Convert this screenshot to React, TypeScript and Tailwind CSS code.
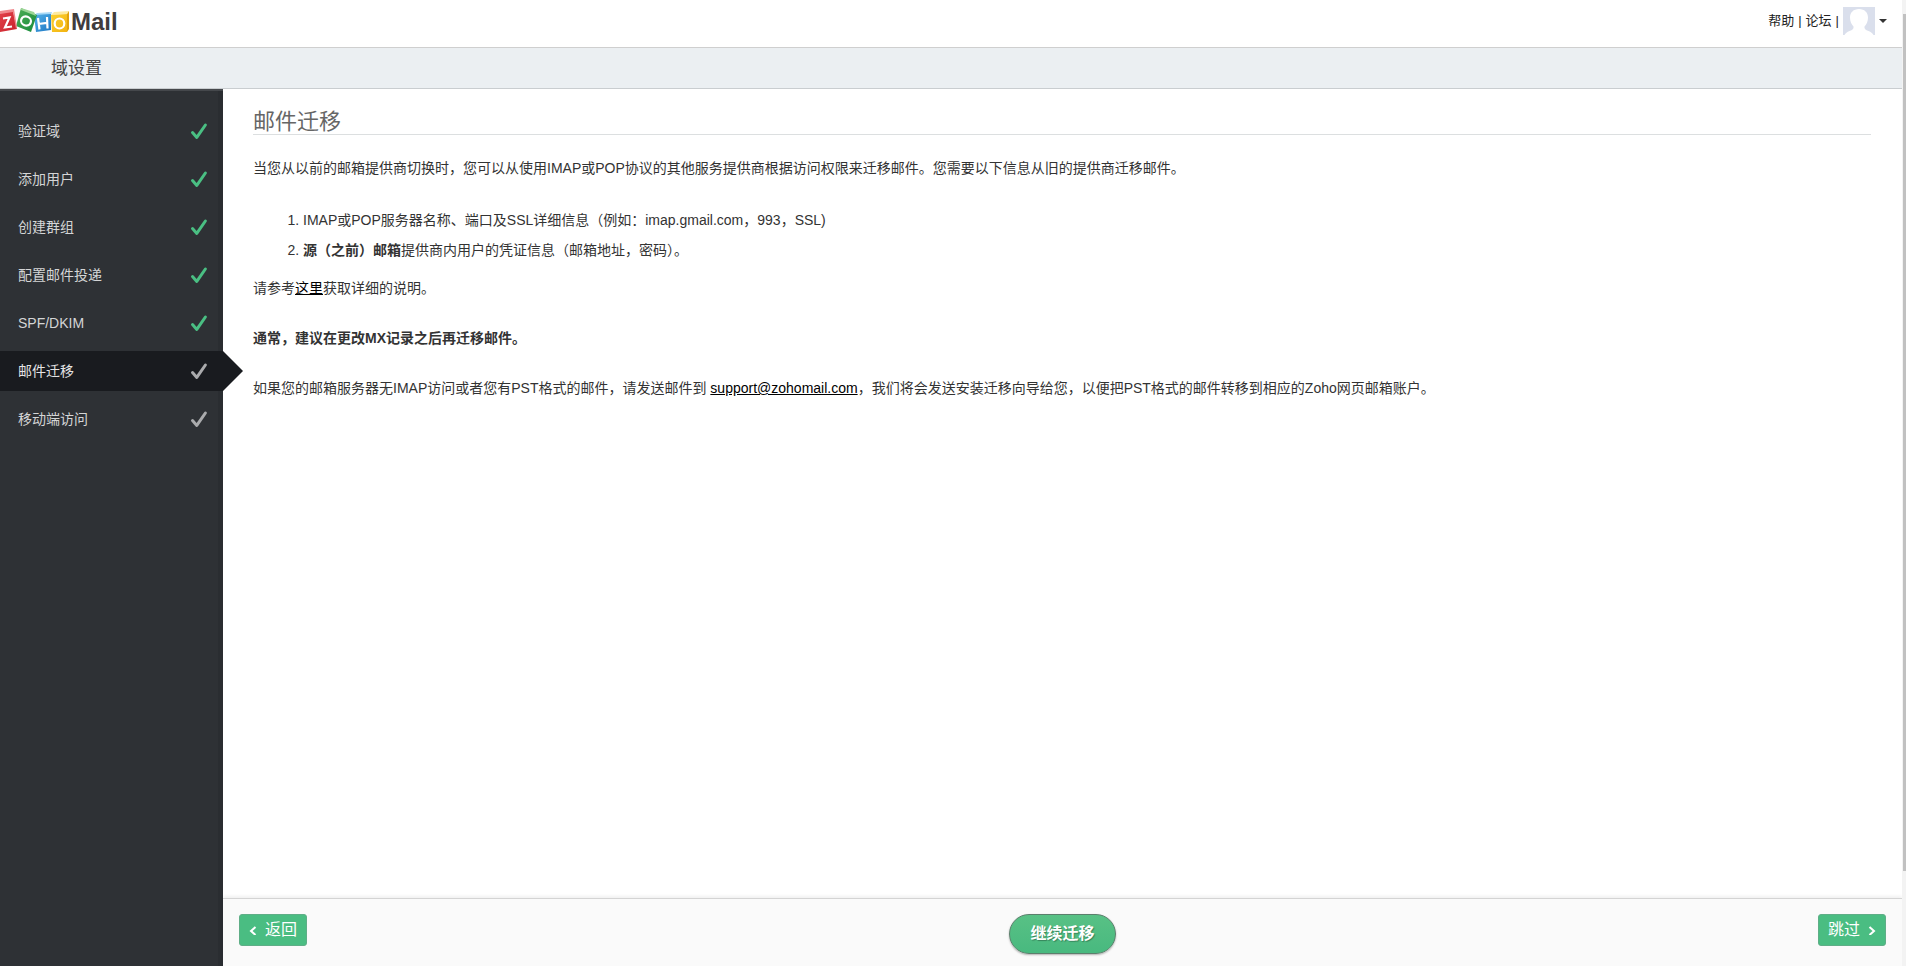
type Step = { label: string; done: boolean; active?: boolean };

const steps: Step[] = [
  { label: "验证域", done: true },
  { label: "添加用户", done: true },
  { label: "创建群组", done: true },
  { label: "配置邮件投递", done: true },
  { label: "SPF/DKIM", done: true },
  { label: "邮件迁移", done: false, active: true },
  { label: "移动端访问", done: false },
];

function Logo() {
  return (
    <svg width="120" height="36" viewBox="0 0 120 36" role="img" aria-label="ZOHO Mail">
      <defs>
        <linearGradient id="red" x1="0" y1="0" x2="1" y2="1">
          <stop offset="0" stopColor="#e2434a" />
          <stop offset="1" stopColor="#c8202a" />
        </linearGradient>
        <linearGradient id="green" x1="0" y1="0" x2="1" y2="1">
          <stop offset="0" stopColor="#4fae55" />
          <stop offset="1" stopColor="#178a3c" />
        </linearGradient>
        <linearGradient id="blue" x1="0" y1="0" x2="1" y2="1">
          <stop offset="0" stopColor="#55b2ea" />
          <stop offset="1" stopColor="#1b76c2" />
        </linearGradient>
        <linearGradient id="gold" x1="0" y1="0" x2="1" y2="1">
          <stop offset="0" stopColor="#fbd02e" />
          <stop offset="1" stopColor="#f3b412" />
        </linearGradient>
      </defs>
      <path d="M51 15 L54 12 L69 11 L67 14Z" fill="#fdeaa0" />
      <path d="M67 14 L69 11 V29 L67 32Z" fill="#e0a20c" />
      <path d="M51 15 L67 14 V32 H52Z" fill="url(#gold)" />
      <path d="M34 15 L37 13 L52 12 L51 15Z" fill="#a8d9f6" />
      <path d="M34 15 L51 14 L51 30 L36 32Z" fill="url(#blue)" />
      <path d="M21 8 L37 15 L31 32 L16 26Z" fill="url(#green)" />
      <path d="M21 8 L34 12 L36 16 L21 10Z" fill="#9bd596" />
      <path d="M0 13 L13 11 L17 29 L0 32Z" fill="url(#red)" />
      <path d="M0 11 L14 9 L17 27 L16 29 L13 12 L0 14Z" fill="#f0898d" />
      <g fill="none" stroke="#fff" strokeWidth="2.200">
        <path d="M3 18.500 L9.500 17.500 L5 27.500 L12 26.500" />
        <ellipse cx="26" cy="21" rx="5" ry="4.500" transform="rotate(20 26 21)" />
        <path d="M38 18 L39.500 29.500 M47 17 L47.500 28.500 M38.500 24 L47 22.800" />
        <ellipse cx="59.500" cy="23.500" rx="4.800" ry="5" />
      </g>
      <text x="71" y="30" fill="#3f3c3d" fontSize="24" fontWeight="700" fontFamily="'Liberation Sans', Arial, sans-serif">
        Mail
      </text>
    </svg>
  );
}

function Check({ done }: { done: boolean }) {
  return (
    <svg width="18" height="18" viewBox="0 0 18 18" fill="none" aria-hidden="true" className={done ? "text-[#4abf83]" : "text-[#aaabad]"}>
      <path d="M2.500 10.600 L6.800 15.400 L15.400 3" stroke="currentColor" strokeWidth="3" strokeLinecap="round" strokeLinejoin="round" />
    </svg>
  );
}

function Chevron({ flip = false }: { flip?: boolean }) {
  return (
    <svg width="8" height="10" viewBox="0 0 8 10" fill="none" aria-hidden="true">
      <path d={flip ? "M1.5 2 L6 6 L1.5 10" : "M6.5 2 L2 6 L6.5 10"} stroke="#fff" strokeWidth="2" />
    </svg>
  );
}

function Avatar() {
  return (
    <svg width="32" height="28" viewBox="0 0 32 28" aria-hidden="true">
      <rect width="32" height="28" fill="#dadfec" />
      <path
        d="M16 2 C21.5 2 25 5.500 25 10.500 C25 14.500 23.500 17.500 21.500 19.500 C21 22 22.500 23 25.500 24 C28 25 29.500 26 30.500 28 H1.500 C2.500 26 4 25 6.500 24 C9.500 23 11 22 10.500 19.500 C8.500 17.500 7 14.500 7 10.500 C7 5.500 10.500 2 16 2Z"
        fill="#fff"
      />
    </svg>
  );
}

function Header() {
  return (
    <header>
      <div className="flex h-12 items-start justify-between border-b border-[#cfcfcf] bg-white pr-[15px]">
        <Logo />
        <div className="flex h-[41px] items-center gap-1 text-[13px] text-[#222]">
          <a href="#help">帮助</a>
          <span>|</span>
          <a href="#forum">论坛</a>
          <span>|</span>
          <button type="button" aria-label="账户" className="flex items-center gap-1">
            <Avatar />
            <svg width="8" height="4" viewBox="0 0 8 4" aria-hidden="true">
              <path d="M0 0 H8 L4 4Z" fill="#333" />
            </svg>
          </button>
        </div>
      </div>
      <div className="flex h-[41px] items-center border-b border-[#c9cdd0] bg-[#ebeff2] pt-0.5 pl-[51px] text-[17px] text-[#444]">域设置</div>
    </header>
  );
}

function Sidebar() {
  return (
    <nav className="w-[223px] shrink-0 border-t-2 border-[#45484c] bg-[#2e3135] pt-5 shadow-[inset_-5px_0_0_#2a2d31]">
      <ul className="flex flex-col gap-2">
        {steps.map((step) => (
          <li key={step.label} className="relative">
            <a
              href="#step"
              aria-current={step.active ? "step" : undefined}
              className={
                "flex h-10 items-center justify-between pr-[15px] pl-[18px] text-sm " +
                (step.active ? "bg-[#191b1f] text-[#e4e4e5]" : "text-[#d4d5d6]")
              }
            >
              {step.label}
              <Check done={step.done} />
            </a>
            {step.active && (
              <svg className="absolute top-0 left-full" width="20" height="40" viewBox="0 0 20 40" aria-hidden="true">
                <path d="M0 0 L20 20 L0 40Z" fill="#191b1f" />
              </svg>
            )}
          </li>
        ))}
      </ul>
    </nav>
  );
}

function Content() {
  return (
    <main className="flex-1 pt-[21px] pr-[31px] pl-[30px] text-sm leading-[30px] text-[#333]">
      <h1 className="border-b border-[#dcdfe0] text-[22px] leading-6 text-[#666]">邮件迁移</h1>
      <p className="mt-[18px]">
        当您从以前的邮箱提供商切换时，您可以从使用IMAP或POP协议的其他服务提供商根据访问权限来迁移邮件。您需要以下信息从旧的提供商迁移邮件。
      </p>
      <ol className="mt-[22px] list-decimal pl-[50px]">
        <li>IMAP或POP服务器名称、端口及SSL详细信息（例如：imap.gmail.com，993，SSL)</li>
        <li>
          <strong>源（之前）邮箱</strong>提供商内用户的凭证信息（邮箱地址，密码）。
        </li>
      </ol>
      <p className="mt-2">
        请参考
        <a href="#guide" className="text-black underline">
          这里
        </a>
        获取详细的说明。
      </p>
      <p className="mt-5 font-bold">通常，建议在更改MX记录之后再迁移邮件。</p>
      <p className="mt-5">
        如果您的邮箱服务器无IMAP访问或者您有PST格式的邮件，请发送邮件到{" "}
        <a href="mailto:support@zohomail.com" className="text-black underline">
          support@zohomail.com
        </a>
        ，我们将会发送安装迁移向导给您，以便把PST格式的邮件转移到相应的Zoho网页邮箱账户。
      </p>
    </main>
  );
}

function Footer() {
  return (
    <footer className="grid h-[68px] grid-cols-3 items-start border-t border-[#d4d4d4] bg-[#fafafa] px-4 pt-[15px] text-base text-white shadow-[0_-2px_3px_rgba(0,0,0,0.06)]">
      <button type="button" className="flex h-8 items-center gap-2 justify-self-start rounded-[3px] border border-[#5fae87] bg-[#4abd82] px-[9px]">
        <Chevron />
        返回
      </button>
      <button
        type="button"
        className="h-10 justify-self-center rounded-full border border-[#5b7f6c] bg-linear-to-b from-[#58c185] to-[#48b97f] px-5 font-bold shadow-[0_1px_2px_rgba(0,0,0,0.3)] [text-shadow:1px_1px_1px_rgba(0,0,0,0.3)]"
      >
        继续迁移
      </button>
      <button type="button" className="flex h-8 items-center gap-2 justify-self-end rounded-[3px] border border-[#5fae87] bg-[#4abd82] px-[9px]">
        跳过
        <Chevron flip />
      </button>
    </footer>
  );
}

export default function App() {
  return (
    <div className="flex min-h-screen bg-white font-['Liberation_Sans','Noto_Sans_CJK_SC',sans-serif]">
      <div className="flex min-w-0 flex-1 flex-col">
        <Header />
        <div className="flex flex-1">
          <Sidebar />
          <div className="flex min-w-0 flex-1 flex-col">
            <Content />
            <Footer />
          </div>
        </div>
      </div>
      <div className="flex w-1 flex-col bg-[#f3f3f3] pt-3.5 pb-[95px] pl-px" aria-hidden="true">
        <div className="flex-1 bg-[#c1c1c1]" />
      </div>
    </div>
  );
}
